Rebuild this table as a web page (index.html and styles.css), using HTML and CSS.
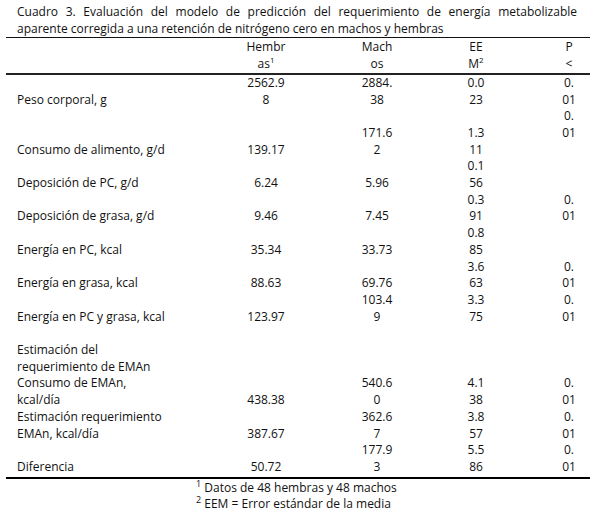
FILE: index.html
```html
<!DOCTYPE html>
<html>

<head>
  <title>Cuadro 3</title>
  <link rel="stylesheet" href="styles.css">
</head>

<body>
  <div class="sheet">
    <p class="caption">Cuadro 3. Evaluación del modelo de predicción del requerimiento de energía metabolizable aparente corregida a una retención de nitrógeno cero en machos y hembras</p>

    <table class="data">
      <colgroup>
        <col class="c-label">
        <col class="c-hem">
        <col class="c-mach">
        <col class="c-eem">
        <col class="c-p">
      </colgroup>
      <thead>
        <tr class="head-first">
          <th></th>
          <th>Hembr</th>
          <th>Mach</th>
          <th>EE</th>
          <th class="p">P</th>
        </tr>
        <tr class="head-last">
          <th></th>
          <th>as<sup>1</sup></th>
          <th>os</th>
          <th>M<sup>2</sup></th>
          <th class="p">&lt;</th>
        </tr>
      </thead>
      <tbody>
        <tr><td></td><td>2562.9</td><td>2884.</td><td>0.0</td><td class="p">0.</td></tr>
        <tr><td>Peso corporal, g</td><td>8</td><td>38</td><td>23</td><td class="p">01</td></tr>
        <tr><td></td><td></td><td></td><td></td><td class="p">0.</td></tr>
        <tr><td></td><td></td><td>171.6</td><td>1.3</td><td class="p">01</td></tr>
        <tr><td>Consumo de alimento, g/d</td><td>139.17</td><td>2</td><td>11</td><td class="p"></td></tr>
        <tr><td></td><td></td><td></td><td>0.1</td><td class="p"></td></tr>
        <tr><td>Deposición de PC, g/d</td><td>6.24</td><td>5.96</td><td>56</td><td class="p"></td></tr>
        <tr><td></td><td></td><td></td><td>0.3</td><td class="p">0.</td></tr>
        <tr><td>Deposición de grasa, g/d</td><td>9.46</td><td>7.45</td><td>91</td><td class="p">01</td></tr>
        <tr><td></td><td></td><td></td><td>0.8</td><td class="p"></td></tr>
        <tr><td>Energía en PC, kcal</td><td>35.34</td><td>33.73</td><td>85</td><td class="p"></td></tr>
        <tr><td></td><td></td><td></td><td>3.6</td><td class="p">0.</td></tr>
        <tr><td>Energía en grasa, kcal</td><td>88.63</td><td>69.76</td><td>63</td><td class="p">01</td></tr>
        <tr><td></td><td></td><td>103.4</td><td>3.3</td><td class="p">0.</td></tr>
        <tr><td>Energía en PC y grasa, kcal</td><td>123.97</td><td>9</td><td>75</td><td class="p">01</td></tr>
        <tr><td>&nbsp;</td><td></td><td></td><td></td><td class="p"></td></tr>
        <tr><td>Estimación del</td><td></td><td></td><td></td><td class="p"></td></tr>
        <tr><td>requerimiento de EMAn</td><td></td><td></td><td></td><td class="p"></td></tr>
        <tr><td>Consumo de EMAn,</td><td></td><td>540.6</td><td>4.1</td><td class="p">0.</td></tr>
        <tr><td>kcal/día</td><td>438.38</td><td>0</td><td>38</td><td class="p">01</td></tr>
        <tr><td>Estimación requerimiento</td><td></td><td>362.6</td><td>3.8</td><td class="p">0.</td></tr>
        <tr><td>EMAn, kcal/día</td><td>387.67</td><td>7</td><td>57</td><td class="p">01</td></tr>
        <tr><td></td><td></td><td>177.9</td><td>5.5</td><td class="p">0.</td></tr>
        <tr class="last"><td>Diferencia</td><td>50.72</td><td>3</td><td>86</td><td class="p">01</td></tr>
      </tbody>
    </table>

    <div class="notes">
      <div><sup>1</sup> Datos de 48 hembras y 48 machos</div>
      <div><sup>2</sup> EEM = Error estándar de la media</div>
    </div>
  </div>
</body>

</html>
```

FILE: styles.css
```css
body {
  margin: 0;
  background: #fff;
  color: #111;
  font-family: "Open Sans", "Noto Sans", sans-serif;
  font-size: 12px;
  line-height: 16.7px;
}

.sheet {
  width: 584px;
  padding: 4px 0 0 6px;
}

.caption {
  margin: 0;
  padding: 0 13px 0 11px;
  text-align: justify;
}

.data {
  width: 584px;
  border-collapse: collapse;
  table-layout: fixed;
  border-top: 1px solid #111;
  border-bottom: 2px solid #000;
}

.c-label {
  width: 220px;
}

.c-hem {
  width: 80px;
}

.c-mach {
  width: 142px;
}

.c-eem {
  width: 56px;
}

.c-p {
  width: 86px;
}

.data th,
.data td {
  padding: 0;
  text-align: center;
  font-weight: normal;
  white-space: nowrap;
  height: 16.7px;
}

.data th:first-child,
.data td:first-child {
  text-align: left;
  padding-left: 11px;
}

.data .p {
  padding-left: 44px;
}

.head-first th {
  padding-top: 1px;
}

.head-last th {
  border-bottom: 2px solid #222;
}

.last td {
  padding-bottom: 1px;
}

sup {
  font-size: 8px;
  line-height: 0;
  vertical-align: 5px;
}

.notes {
  padding: 1px 0 0 190px;
}

.notes sup {
  font-size: 9px;
}
```
